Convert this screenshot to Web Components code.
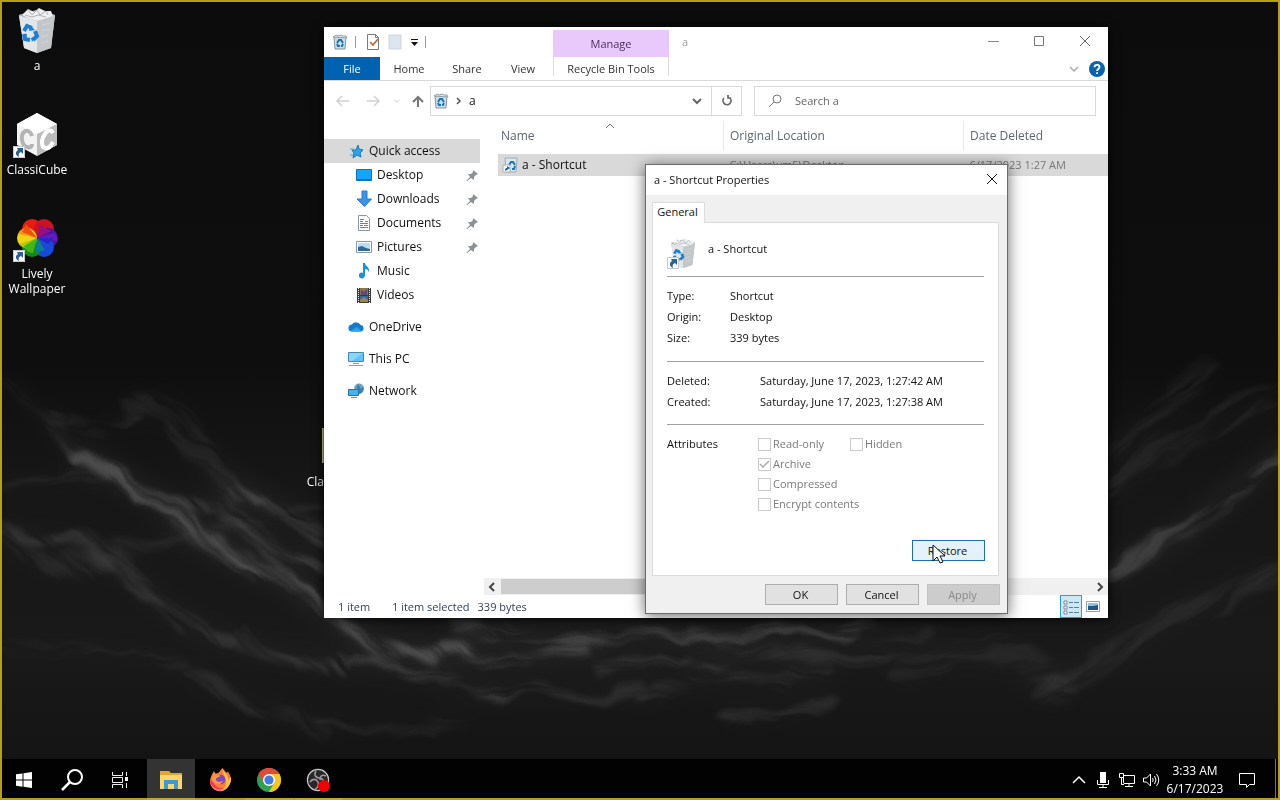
<!DOCTYPE html>
<html lang="en">
<head>
<meta charset="utf-8">
<meta name="viewport" content="width=device-width, initial-scale=1">
<title>Desktop</title>
<style>
html, body { margin: 0; height: 100%; }
body { font: 12px/16px "Open Sans", "Noto Sans", sans-serif; color: #000; background: #0c0c0c; overflow: hidden; }
</style>
</head>
<body>
<win-desktop>
  <desktop-icon slot="canvas" icon="bin" style="--x:0px;--y:6px">a</desktop-icon>
  <desktop-icon slot="canvas" icon="cube" shortcut style="--x:0px;--y:110px">ClassiCube</desktop-icon>
  <desktop-icon slot="canvas" icon="lively" shortcut style="--x:0px;--y:214px">Lively Wallpaper</desktop-icon>
  <desktop-icon slot="canvas" icon="folder" style="--x:300px;--y:422px">ClassiCube</desktop-icon>
  <explorer-window slot="canvas"></explorer-window>
  <properties-dialog slot="canvas"></properties-dialog>
  <task-bar slot="taskbar"></task-bar>
</win-desktop>

<script>
const binShape = `
  <path d="M6 9l17-4 19 4-4 33-14 5-13-5z" fill="#cfd3d6"/>
  <path d="M6 10l18 4v33l-13-5z" fill="#e3e6e8"/><path d="M24 14l18-5-4 33-14 5z" fill="#c3c7ca"/>
  <path d="M6 9l17-5 19 5-18 6z" fill="#9da3a8"/>
  <path d="M9 9l6-6 6 3 5-4 6 3 6 0 2 5-9 3-7 2-9-3z" fill="#eef0f1"/><path d="M15 4l4 5 5-5 3 5 6-4 2 4M12 9l7 2 6-2 8 2" stroke="#aeb4b8" fill="none"/>
  <path d="M29 19l8-2M29 25l7-2M28 31l7-2M28 37l7-2" stroke="#d2d6d9" fill="none"/>
  <g fill="none" stroke="#1d7fd0" stroke-width="4"><path d="M11 25l3-5 5 2"/><path d="M22 25l2 5-4 4"/><path d="M17 34l-5-1-1-5"/></g>
  <path d="M17 19l5 5-6 1zM23 30l-4 6-1-4zM9 29l5-1-1 5z" fill="#1d7fd0"/>`;
const smallBin = `
  <path d="M2 3h12l-1 12H3z" fill="#cfdce6" stroke="#8596a3"/><path d="M1 3l3-2 2 1 3-1 2 1 3 0 1 2z" fill="#dfe5ea" stroke="#94a1ab"/>
  <path d="M5 9l2-3h2l2 3M11 10l-1 2H9M5 10l1 2h2" stroke="#1676b8" stroke-width="2" fill="none"/>`;
const ICONS = {
  bin: [48, binShape],
  smallbin: [16, smallBin],
  shortcutbin: [16, `<path d="M3 1h12l-1 14H4z" fill="#dbe7ef" stroke="#9aacb9"/><path d="M7 8l2-3h2l2 3M13 9l-1 3h-2" stroke="#1676b8" stroke-width="2" fill="none"/><path d="M1 8h7v7H1z" fill="#fff" stroke="#a7b3bc"/><path d="M3 14c0-3 1-3 2-3V9l3 2-3 2" fill="#1f5f9f"/>`],
  arrow: [12, `<path d="M0 0h12v12H0z" fill="#fff"/><path d="M.500.500h11v11H.500z" fill="none" stroke="#c4c9ce"/><path d="M4 2h6v6L8 6c-2 1-3 2-2 5-4-2-4-5-1-7z" fill="#2f5f97"/>`],
  cube: [48, `<path d="M24 3l20 11v21L24 46 4 35V14z" fill="#f3f3f3"/><path d="M24 3l20 11-20 10L4 14z" fill="#fff"/><path d="M24 24l20-10v21L24 46z" fill="#bcbcbc"/>
    <path d="M19 26c-1-4-5-7-8-4-4 4-2 14 3 15 3 1 5 0 5-3" fill="none" stroke="#b4b4b4" stroke-width="4"/><path d="M40 23c-2-4-6-3-8 1-4 5-4 13 0 14 3 1 6-2 8-6" fill="none" stroke="#fff" stroke-width="4"/>`],
  lively: [48, `<circle cx="19" cy="15" r="10" fill="#e81a14"/><circle cx="31" cy="15" r="10" fill="#c91222"/><circle cx="35" cy="24" r="10" fill="#4b16a0"/><circle cx="31" cy="33" r="10" fill="#1749dd"/><circle cx="19" cy="33" r="10" fill="#128a17"/><circle cx="14" cy="24" r="10" fill="#f3d311"/>
    <path d="M24 24L5 20a10 10 0 0 1 12-6z" fill="#f59a12"/><path d="M24 24L9 18l4-8z" fill="#f0500e"/><path d="M24 24L13 34a10 10 0 0 1-7-4z" fill="#a8cf12"/><path d="M24 24l-4 15a9 9 0 0 1-9-7z" fill="#45b514"/><path d="M24 24l-2 15 10-3z" fill="#0d7d95"/><path d="M24 24l17-5a10 10 0 0 1 3 8z" fill="#6719c0"/><path d="M24 24l3-13 11 6z" fill="#951080"/><path d="M24 24l11 6 6-6z" fill="#2a23c9"/>`],
  folder: [48, `<path d="M9 6h36v35H9z" fill="#c9b95e"/><path d="M9 6h1v35H9z" fill="#efe6ac"/>`],
  docCheck: [16, `<path d="M2.500.500h8l3 3v12h-11z" fill="#fff" stroke="#7a7a7a"/><path d="M10.500.500v3h3" fill="none" stroke="#7a7a7a"/><path d="M5 8l3 3 5-6" fill="none" stroke="#b5693f" stroke-width="1.700"/>`],
  docPale: [16, `<path d="M2 1h12v14H2z" fill="#dbe6ef" stroke="#c9d5df"/>`],
  qat: [10, `<path d="M0 2h7v1H0zM0 5h7L3.500 9z" fill="#111"/>`],
  min: [12, `<path d="M1 6h11v1H1z" fill="#888"/>`],
  max: [12, `<path d="M1.500 1.500h9v9h-9z" fill="none" stroke="#777"/>`],
  close: [12, `<path d="M1 1l10 10M11 1L1 11" stroke="currentColor" fill="none"/>`],
  down: [12, `<path d="M2 4l4 4 4-4" stroke="currentColor" stroke-width="2" fill="none"/>`],
  thinDown: [12, `<path d="M2 4l4 4 4-4" stroke="currentColor" stroke-width="1.500" fill="none"/>`],
  thinUp: [12, `<path d="M2 7l4-4 4 4" stroke="currentColor" fill="none"/>`],
  rightSmall: [8, `<path d="M2 1l3 3-3 3" stroke="#555" stroke-width="1.500" fill="none"/>`],
  left: [12, `<path d="M7 2L3 6l4 4" stroke="#444" stroke-width="2" fill="none"/>`],
  right: [12, `<path d="M4 2l4 4-4 4" stroke="#444" stroke-width="2" fill="none"/>`],
  back: [14, `<path d="M13 7H2M6 2L1 7l5 5" stroke="#d2d2d2" stroke-width="1.500" fill="none"/>`],
  forward: [14, `<path d="M1 7h11M8 2l5 5-5 5" stroke="#d2d2d2" stroke-width="1.500" fill="none"/>`],
  up: [14, `<path d="M7 13V3M2 8l5-5 5 5" stroke="#777" stroke-width="2" fill="none"/>`],
  refresh: [12, `<path d="M9 3a4 4 0 1 1-6 0M2 3h3V0" stroke="#666" stroke-width="1.700" fill="none" transform="matrix(-1 0 0 1 12 0)"/>`],
  search: [14, `<circle cx="9" cy="5" r="4" fill="none" stroke="#777"/><path d="M6 8l-5 5" stroke="#777"/>`],
  help: [16, `<circle cx="8" cy="8" r="8" fill="#0b62b0"/><path d="M5.500 6.200C5.500 3 10.500 3 10.500 6c0 2-2.400 1.900-2.400 4M8.100 11.300v1.600" stroke="#fff" stroke-width="1.800" fill="none"/>`],
  star: [16, `<path d="M10 2l1 4 4 1-3 3 1 4-4-2-4 3 1-5-2-3h4z" fill="#2ba5e8" stroke="#1b76b5"/><path d="M2 6h4M2 12h3" stroke="#4aa5dd"/>`],
  desk: [16, `<path d="M.500 2.500h15v11H.500z" fill="#12a5fb" stroke="#0c74c2"/><path d="M1 12h14v1H1z" fill="#0b68ad"/>`],
  dl: [16, `<path d="M6 0h5v8h4.500L8.500 15.500 1 8h5z" fill="#3b93e8" stroke="#2c78c6"/>`],
  doc: [16, `<path d="M2.500.500h8l3 3v12h-11z" fill="#fff" stroke="#8b979f"/><path d="M4 4.500h4M4 6.500h3M9 6.500h3M4 8.500h8M4 10.500h3M8 10.500h4M4 12.500h8" stroke="#3a9aa0"/>`],
  pic: [16, `<path d="M.500 2.500h15v11H.500z" fill="#fff" stroke="#8d979f"/><path d="M2 4h12v8H2z" fill="#b9dff7"/><path d="M2 8l4-1 4 2 4 1v2H2z" fill="#33699a"/>`],
  music: [16, `<path d="M7 0h2c0 3 5 4 4 9-1-2-2-3-4-3v6c0 5-7 4-6 0 0-2 2-3 4-2z" fill="#1593dc"/>`],
  video: [16, `<path d="M1 1h14v15H1z" fill="#3a3a3a"/><path d="M4 1h8v7H4z" fill="#8d7350"/><path d="M4 9h8v6H4z" fill="#3468a8"/><path d="M5 3l3 2 3-3v6H5z" fill="#5b4a7a"/><path d="M4 13l4-3 4 3v2H4z" fill="#a08644"/><path d="M2.500 1v15M13.500 1v15" stroke="#eee" stroke-dasharray="1 1"/>`],
  cloud: [16, `<path d="M4 12.500a3.500 3.500 0 0 1 0-7 5 5 0 0 1 8.500.500 3.300 3.300 0 0 1 .500 6.500z" fill="#1379cf"/><path d="M2 12l7-4 5 4.500H4z" fill="#2aa5ec"/>`],
  pc: [16, `<path d="M.500 1.500h15v9H.500z" fill="#62c2f7" stroke="#4b87ad"/><path d="M1 2h14L4 10H1z" fill="#8ad6fb"/><path d="M5 12.500h6M1 14.500h14" stroke="#8d9ba5"/>`],
  net: [16, `<path d="M6 5c1-6 9-6 10 0 0 4-2 6-6 6z" fill="#6ba3c4"/><path d="M10 1c-2 3-1 8 0 10 4-1 6-4 5-7l-2 2z" fill="#3d7fa8"/><path d="M.500 6.500h10v6H.500z" fill="#43b4f2" stroke="#2b719c"/><path d="M3 14.500h6" stroke="#5c90ad"/>`],
  pin: [12, `<path d="M7 1l5 4-2 1-2 2 0 3-3-2-4 3-1 0 4-4-2-3h3l2-2z" fill="#8c9196"/>`],
  details: [16, `<path d="M1 2h3v3H1zM1 7h3v3H1zM1 12h3v3H1z" fill="#fff" stroke="#8a8190"/><path d="M6 3.500h4M11 3.500h5M6 8.500h4M11 8.500h5M6 13.500h4M11 13.500h5" stroke="#5c7f90"/>`],
  thumb: [14, `<path d="M.500 1.500h13v10H.500z" fill="#fff" stroke="#8ea2b0"/><path d="M2 3h10v3H2z" fill="#8bc4ec"/><path d="M2 6h5l5-1v5H2z" fill="#27577f"/>`],
  win: [16, `<path d="M0 2.300L6.500 1.400v6.200H0zM7.500 1.200L16 0v7.600H7.500zM0 8.500h6.500v6.200L0 13.800zM7.500 8.500H16V16l-8.500-1.200z" fill="#fff"/>`],
  tbSearch: [22, `<circle cx="14" cy="8" r="7" fill="none" stroke="#fff" stroke-width="2"/><path d="M9 13l-8 8" stroke="#fff" stroke-width="2.500"/>`],
  taskview: [16, `<path d="M.500 0v3.500h10V0M.500 16v-3.500h10V16M.500 5.500h10v5H.500zM14.500 0v4M14.500 11v5" fill="none" stroke="#eee"/><path d="M13 5h3v4h-3z" fill="#eee"/>`],
  explorer: [22, `<path d="M0 2h9l2 2h11v16H0z" fill="#e5a52d"/><path d="M0 6h22v14H0z" fill="#fbd76b"/><path d="M4 20v-9h14v9h-4v-5H8v5z" fill="#3f97d3"/>`],
  firefox: [24, `<path d="M3 7L5 3l2 3 3-1 4-5 4 5 2-1c3 5 4 9 1 14-4 8-14 8-18 2-3-4-2-9 0-13z" fill="#ff7a32"/><path d="M14 0c0 4 7 6 6 13l3-4c1 7-4 14-11 15 6-4 8-11 3-17z" fill="#ffc23a"/><path d="M1 12c1 9 8 12 15 9-7 1-10-3-12-7z" fill="#ef3366"/><circle cx="12" cy="12" r="5" fill="#7a48c6"/><path d="M4 7c3-2 6 0 8 1-1 2-4 1-5 4 1 3 5 3 8 1-3 6-11 5-12-1z" fill="#ff963c"/>`],
  chrome: [24, `<circle cx="12" cy="12" r="12" fill="#2fa150"/><path d="M12 12L1.600 6A12 12 0 0 1 22.400 6z" fill="#e04a3a"/><path d="M12 6h10.400A12 12 0 0 1 12 24l5.200-9z" fill="#fbc518"/><path d="M1.600 6L7 15l5-9h10.400A12 12 0 0 0 1.600 6z" fill="#e04a3a"/><circle cx="12" cy="12" r="6" fill="#fff"/><circle cx="12" cy="12" r="4.600" fill="#3b7de2"/>`],
  obs: [24, `<circle cx="12" cy="12" r="10.600" fill="#28272b" stroke="#c9c9c9" stroke-width="1.200"/><path d="M10 3c-3 5 1 7 4 7 3 1 5 3 4 7M4 14c2-3 6-4 8 0 1 3 0 6-3 7M20 8c-4-2-6 0-6 4" fill="none" stroke="#999" stroke-width="1.600"/><circle cx="18" cy="18" r="6" fill="#f20000"/>`],
  chevUp: [14, `<path d="M1 10l6-6 6 6" stroke="#fff" stroke-width="1.500" fill="none"/>`],
  mic: [16, `<path d="M5 0h6v11H5z" fill="#fff"/><path d="M2.500 8v4.500h11V8M8 13v2.500M4 15.500h8" stroke="#fff" fill="none"/>`],
  lan: [16, `<path d="M4.500 3.500h11v8h-11zM10 12v3M6 14.500h8" stroke="#fff" fill="none"/><path d="M.500 1.500h4v4h-4zM2.500 6v6.500H5" stroke="#fff" fill="#000"/>`],
  sound: [16, `<path d="M.500 6h3l4-4v12l-4-4h-3z" stroke="#fff" fill="none"/><path d="M9.500 6q1.500 2 0 4M11.500 4q3 4 0 8M13.500 2q4.500 6 0 12" stroke="#fff" fill="none"/>`],
  note: [18, `<path d="M1.500 2.500h15v11h-5l-3 3v-3h-7z" stroke="#fff" fill="none"/>`],
  cursor: [20, `<path d="M1 0v16l4-4 3 6 3-1-3-6h5z" fill="#fff" stroke="#111"/>`]
};

/* Registers an element whose shadow root is cloned from a template. */
function component(tag, html, setup) {
  const template = document.createElement("template");
  template.innerHTML = html;
  customElements.define(tag, class extends HTMLElement {
    connectedCallback() {
      if (this.shadowRoot) return;
      this.attachShadow({ mode: "open" }).append(template.content.cloneNode(true));
      if (setup) setup.call(this, this.shadowRoot);
    }
  });
}

component("ui-icon", `<style>:host{display:block;flex:none}svg{display:block;overflow:visible}</style><svg aria-hidden="true"></svg>`, function (root) {
  const [box, body] = ICONS[this.getAttribute("name")];
  const size = this.getAttribute("size") || box;
  const svg = root.querySelector("svg");
  svg.setAttribute("viewBox", `0 0 ${box} ${box}`);
  svg.setAttribute("width", size);
  svg.setAttribute("height", size);
  svg.innerHTML = body;
});

/* The fibres are noise stretched along one axis; each ridge group is filtered in a rotated frame so they run with the slope. */
component("desktop-wallpaper", `
<style>:host{display:block;position:absolute;inset:0}svg{display:block;width:100%;height:100%}</style>
<svg viewBox="0 0 1280 800" preserveAspectRatio="xMidYMid slice" aria-hidden="true">
  <defs>
    <linearGradient id="g" x2="0" y2="1"><stop offset="0" stop-color="#0c0c0c"/><stop offset=".45" stop-color="#0e0e0e"/><stop offset=".6" stop-color="#161616"/><stop offset=".82" stop-color="#191919"/><stop offset="1" stop-color="#121212"/></linearGradient>
    <filter id="haze" filterUnits="userSpaceOnUse" x="0" y="300" width="1280" height="500"><feGaussianBlur stdDeviation="12"/></filter>
    <filter id="silk" filterUnits="userSpaceOnUse" x="-900" y="-900" width="2600" height="2600">
      <feTurbulence type="fractalNoise" baseFrequency=".016" numOctaves="3" seed="9" result="warp"/>
      <feDisplacementMap in="SourceGraphic" in2="warp" scale="24" xChannelSelector="R" yChannelSelector="G"/>
      <feGaussianBlur stdDeviation="3" result="soft"/>
      <feTurbulence type="fractalNoise" baseFrequency=".009 .075" numOctaves="4" seed="21"/>
      <feColorMatrix values="0 0 0 0 1  0 0 0 0 1  0 0 0 0 1  3 0 0 0 -.9" result="fibres"/>
      <feComposite in="soft" in2="fibres" operator="in" result="strands"/>
      <feDisplacementMap in="strands" in2="warp" scale="24" xChannelSelector="G" yChannelSelector="B"/>
      <feGaussianBlur stdDeviation=".7"/>
    </filter>
    <g id="left" fill="none" stroke="#fff" stroke-linecap="round" stroke-linejoin="round">
      <path d="M6 378L45 420 73 450 118 478" stroke-width="10" stroke-opacity=".35"/>
      <path d="M78 455L118 476 171 510 196 537 245 564 286 578 318 604 347 626 376 647 433 654 469 652" stroke-width="15" stroke-opacity=".8"/>
      <path d="M135 405L167 405 196 445 229 485 261 502" stroke-width="26" stroke-opacity=".24"/>
      <path d="M229 485L261 502 298 519 330 542" stroke-width="15" stroke-opacity=".55"/>
      <path d="M0 534L86 547 114 559 163 605 204 632 261 649 347 665" stroke-width="14" stroke-opacity=".42"/>
      <path d="M0 535L20 552 50 566 90 567 114 559" stroke-width="14" stroke-opacity=".25"/>
      <path d="M196 679L253 705 327 729" stroke-width="13" stroke-opacity=".3"/>
      <path d="M180 509L220 505 245 532 278 555 325 564" stroke-width="18" stroke-opacity=".45"/>
    </g>
    <g id="right" fill="none" stroke="#fff" stroke-linecap="round" stroke-linejoin="round">
      <path d="M1095 575L1150 553 1191 527 1244 483 1290 440" stroke-width="17" stroke-opacity=".6"/>
      <path d="M1108 490L1150 453 1211 425 1277 400" stroke-width="24" stroke-opacity=".22"/>
      <path d="M1108 450L1171 403 1211 365" stroke-width="18" stroke-opacity=".22"/>
      <path d="M1040 690L1109 657 1171 617 1277 573" stroke-width="22" stroke-opacity=".24"/>
    </g>
    <g id="flat" fill="none" stroke="#fff" stroke-linecap="round" stroke-linejoin="round">
      <path d="M0 650L45 647 122 650 180 665M327 727L408 725 470 720M0 482L53 482 110 470M60 420L98 430 140 420M120 545L200 538 260 515 320 510" stroke-width="10" stroke-opacity=".25"/>
      <path d="M347 663L392 668 449 680 502 697" stroke-width="10" stroke-opacity=".5"/>
      <path d="M460 624L500 632 535 638M470 655L530 660 590 650M545 640L600 642 650 632 720 640 800 634 840 628 870 622" stroke-width="12" stroke-opacity=".6"/>
      <path d="M600 665L680 664 740 652 790 658 850 655 900 640 930 632M640 700L700 680 740 660M480 690L560 694 640 690M700 676L770 680 830 672M720 712L760 716 830 700" stroke-width="11" stroke-opacity=".35"/>
      <path d="M900 668L960 652 1020 660 1060 690" stroke-width="30" stroke-opacity=".2"/>
    </g>
  </defs>
  <rect width="1280" height="800" fill="url(#g)"/>
  <g filter="url(#haze)" opacity=".09"><use href="#left"/><use href="#right"/><use href="#flat"/></g>
  <g opacity=".24">
    <g transform="rotate(38)"><g filter="url(#silk)"><use href="#left" transform="rotate(-38)"/></g></g>
    <g transform="rotate(-34)"><g filter="url(#silk)"><use href="#right" transform="rotate(34)"/></g></g>
    <g filter="url(#silk)"><use href="#flat"/></g>
  </g>
</svg>`);

component("win-desktop", `
<style>
:host{display:flex;flex-direction:column;height:100vh;position:relative;overflow:hidden;background:#0c0c0c}
main{position:relative;flex:1;min-height:0}
.frame{position:absolute;inset:0;border:2px solid #c3a71bf0;pointer-events:none}
</style>
<desktop-wallpaper></desktop-wallpaper>
<main><slot name="canvas"></slot></main>
<slot name="taskbar"></slot>
<div class="frame"></div>`);

component("desktop-icon", `
<style>
:host{display:block;position:absolute;left:var(--x);top:var(--y);width:74px;color:#fff;text-align:center;line-height:15px}
.pic{position:relative;width:48px;margin:0 auto 4px}
.badge{position:absolute;left:0;bottom:0}
</style>
<div class="pic"></div><slot></slot>`, function (root) {
  root.querySelector(".pic").innerHTML = `<ui-icon name="${this.getAttribute("icon")}"></ui-icon>` +
    (this.hasAttribute("shortcut") ? `<ui-icon class="badge" name="arrow"></ui-icon>` : "");
});

component("side-link", `
<style>
:host{display:block}
:host([gap]){margin-top:8px}
a{display:flex;align-items:center;height:24px;gap:5px;padding:0 2px 0 24px;color:#111;text-decoration:none}
:host([sub]) a{padding-left:32px}
:host([selected]) a{background:#d9d9d9}
span{flex:1}
</style>
<a href="#"><span><slot></slot></span></a>`, function (root) {
  const link = root.querySelector("a");
  link.insertAdjacentHTML("afterbegin", `<ui-icon name="${this.getAttribute("icon")}"></ui-icon>`);
  if (this.hasAttribute("pinned")) link.insertAdjacentHTML("beforeend", `<ui-icon name="pin"></ui-icon>`);
});

component("explorer-window", `
<style>
:host{position:absolute;left:324px;right:172px;top:27px;bottom:141px;display:flex;flex-direction:column;background:#fff;color:#333;box-shadow:0 0 10px #000}
button{font:inherit;color:inherit;border:0;background:none;padding:0;display:flex;align-items:center;justify-content:center}
header{display:flex;height:30px;font-size:11px}
.quick{display:flex;align-items:center;width:221px;padding-left:8px}
.quick button{width:16px;height:24px}
.quick i{width:1px;height:12px;background:#999}
.quick .first{margin:0 9px 0 7px}
.quick .page{margin:0 5px 0 6px}
.quick .more{width:10px;margin-right:4px;margin-left:3px}
.manage{width:116px;margin-top:3px;box-sizing:border-box;background:#e9c9fb;color:#4c2b60;display:flex;align-items:center;justify-content:center}
.title{flex:1;padding:7px 13px;color:#999}
.caption{width:46px;height:28px;color:#666}
.tabs{display:flex;height:23px;border-bottom:1px solid #dadada;font-size:11px}
.tabs button{width:58px}
.tabs .file{width:56px;background:#0063b1;color:#fff}
.tabs .view{width:54px}
.tabs .tools{width:116px;margin:0 auto 4px 3px;border:solid #dcdcdc;border-width:0 1px;padding-top:4px;box-sizing:border-box}
.tabs .more{width:20px;color:#aaa}.tabs .help{width:24px;padding-left:1px}
.bar{display:flex;align-items:center;height:40px;padding-right:12px}
.bar nav{display:flex;align-items:center;width:106px}
.nav{width:30px;height:28px}
.bar .backb{margin-left:4px}
.bar .recent{width:17px;color:#ccc}
.bar .upb{width:25px}
.field{box-sizing:border-box;height:30px;border:1px solid #d9d9d9;display:flex;align-items:center}
.address{flex:1;padding-left:2px;color:#111}
.crumb{display:flex;align-items:center;gap:6px;flex:1}
.drop{width:28px;height:28px;color:#666}.refresh{width:30px;height:28px;border-left:1px solid #d9d9d9}
.search{width:342px;margin-left:12px;padding:0 13px}
.search input{flex:1;min-width:0;border:0;padding:0 0 0 13px;font:inherit;font-size:11px;outline:0}
.search input::placeholder{color:#666;opacity:1}
.content{display:grid;grid-template-columns:160px 1fr;flex:1;min-height:0}
.side{padding:18px 4px 0 0}
.list{display:flex;flex-direction:column;min-width:0}
table{border-collapse:collapse;table-layout:fixed;width:calc(100% - 14px);margin-left:14px}
th,td{font-weight:400;text-align:left;padding:0 0 0 6px;white-space:nowrap;overflow:hidden}
th{height:30px;color:#5c6672;position:relative}
th+th{border-left:1px solid #e8e8e8}
th:first-child{padding-left:3px;width:222px}th:nth-child(2){width:233px}
.sort{position:absolute;left:106px;top:0;color:#777}
tbody tr:first-child td{height:3px}
.row td{height:22px;background:#d9d9d9;color:#777;font-size:11px}
.row td:first-child{padding-left:4px;color:#111}
.file-name{display:flex;align-items:center;gap:4px;font-size:12px}
.scroll{display:flex;align-items:center;height:17px;margin-top:auto;background:#f0f0f0}
.scroll button{width:17px;height:17px}.track{flex:1}.thumb{width:60%;height:15px;background:#cdcdcd}
footer{display:flex;align-items:center;height:23px;padding:0 4px 0 14px;color:#33405a;font-size:11px}
.n{width:54px}.s{margin-right:8px}.sp{flex:1}
footer button{width:22px;height:23px;box-sizing:border-box}
.on{background:#cbe8f6;border:1px solid #26a0da}
</style>
<header>
  <div class="quick"><button aria-label="Window menu"><ui-icon name="smallbin"></ui-icon></button><i class="first"></i>
    <button aria-label="Properties"><ui-icon name="docCheck"></ui-icon></button><button class="page" aria-label="New"><ui-icon name="docPale"></ui-icon></button>
    <button class="more" aria-label="Customize"><ui-icon name="qat"></ui-icon></button><i></i></div>
  <div class="manage">Manage</div><div class="title">a</div>
  <button class="caption" aria-label="Minimize"><ui-icon name="min"></ui-icon></button>
  <button class="caption" aria-label="Maximize"><ui-icon name="max"></ui-icon></button>
  <button class="caption" aria-label="Close"><ui-icon name="close"></ui-icon></button>
</header>
<div class="tabs"><button class="file">File</button><button>Home</button><button>Share</button><button class="view">View</button><button class="tools">Recycle Bin Tools</button>
  <button class="more" aria-label="Expand ribbon"><ui-icon name="thinDown"></ui-icon></button><button class="help" aria-label="Help"><ui-icon name="help"></ui-icon></button></div>
<div class="bar">
  <nav><button class="nav backb" aria-label="Back"><ui-icon name="back"></ui-icon></button><button class="nav" aria-label="Forward"><ui-icon name="forward"></ui-icon></button><button class="recent" aria-label="Recent"><ui-icon name="thinDown" size="8"></ui-icon></button><button class="upb" aria-label="Up"><ui-icon name="up"></ui-icon></button></nav>
  <div class="field address"><div class="crumb"><ui-icon name="smallbin"></ui-icon><ui-icon name="rightSmall"></ui-icon><span>a</span></div>
    <button class="drop" aria-label="Previous locations"><ui-icon name="down"></ui-icon></button><button class="refresh" aria-label="Refresh"><ui-icon name="refresh"></ui-icon></button></div>
  <label class="field search"><ui-icon name="search"></ui-icon><input type="text" placeholder="Search a" aria-label="Search a"></label>
</div>
<div class="content">
  <nav class="side">
    <side-link icon="star" selected>Quick access</side-link>
    <side-link icon="desk" sub pinned>Desktop</side-link>
    <side-link icon="dl" sub pinned>Downloads</side-link>
    <side-link icon="doc" sub pinned>Documents</side-link>
    <side-link icon="pic" sub pinned>Pictures</side-link>
    <side-link icon="music" sub>Music</side-link>
    <side-link icon="video" sub>Videos</side-link>
    <side-link icon="cloud" gap>OneDrive</side-link>
    <side-link icon="pc" gap>This PC</side-link>
    <side-link icon="net" gap>Network</side-link>
  </nav>
  <div class="list">
    <table>
      <thead><tr><th>Name<ui-icon class="sort" name="thinUp"></ui-icon></th><th>Original Location</th><th>Date Deleted</th></tr></thead>
      <tbody><tr aria-hidden="true"><td colspan="3"></td></tr>
      <tr class="row"><td><div class="file-name"><ui-icon name="shortcutbin"></ui-icon>a - Shortcut</div></td><td>C:\\Users\\vm5\\Desktop</td><td>6/17/2023 1:27 AM</td></tr></tbody>
    </table>
    <div class="scroll"><button aria-label="Scroll left"><ui-icon name="left"></ui-icon></button><div class="track"><div class="thumb"></div></div><button aria-label="Scroll right"><ui-icon name="right"></ui-icon></button></div>
  </div>
</div>
<footer><span class="n">1 item</span><span class="s">1 item selected</span><span>339 bytes</span><span class="sp"></span>
  <button class="on" aria-label="Details view"><ui-icon name="details"></ui-icon></button><button aria-label="Thumbnail view"><ui-icon name="thumb"></ui-icon></button></footer>`);

component("attr-check", `
<style>
:host{display:block}
label{display:flex;align-items:center;gap:2px;color:#7a7a7a}
input{appearance:none;width:13px;height:13px;margin:0;border:1px solid #ccc;background:#fff}
input:checked{background:no-repeat center/11px url("data:image/svg+xml,%3Csvg xmlns='http://www.w3.org/2000/svg' viewBox='0 0 11 11'%3E%3Cpath d='M1 5l3 3 6-6' fill='none' stroke='%23aaa' stroke-width='1.500'/%3E%3C/svg%3E")}
</style>
<label><input type="checkbox" disabled><slot></slot></label>`, function (root) {
  root.querySelector("input").checked = this.hasAttribute("checked");
});

component("push-button", `
<style>
:host{display:block;width:73px}
button{font:inherit;width:100%;height:21px;padding:0 2px 0 0;border:1px solid #adadad;background:#e1e1e1;color:#111;display:block}
:host([hot]) button{background:#e5f1fb;border-color:#1f6fb0}
button:disabled{background:#ccc;border-color:#c2c2c2;color:#8b8b8b}
</style>
<button><slot></slot></button>`, function (root) {
  root.querySelector("button").disabled = this.hasAttribute("off");
});

component("properties-dialog", `
<style>
:host{position:absolute;right:272px;top:164px;width:363px;box-sizing:border-box;border:1px solid #6b6b6b;background:#f0f0f0;color:#111;box-shadow:0 2px 14px #0009}
.bar{display:flex;align-items:center;justify-content:space-between;height:30px;padding-left:8px;background:#fff;font-size:11px}
.bar button{width:30px;height:28px;border:0;background:none;padding:0;margin-bottom:2px;color:#111;display:flex;align-items:center;justify-content:center}
.body{padding:7px 8px 8px 6px;font-size:11px}
.tab{display:block;font:inherit;width:53px;height:21px;padding:0 2px 2px 0;border:1px solid #dcdcdc;border-bottom:0;background:#fff;color:#111;position:relative;margin-bottom:-1px}
.panel{border:1px solid #dcdcdc;background:#fff;padding:14px 14px}
.head{display:flex;gap:9px;height:39px}
.head .pic{position:relative}.badge{position:absolute;left:0;bottom:7px}
.head span{padding-top:4px}
hr{border:0;border-top:1px solid #a0a0a0;margin:0}
dl{display:grid;grid-template-columns:63px 1fr;grid-auto-rows:21px;align-items:center;margin:0;padding:8px 0 13px}
dl.dates{grid-template-columns:93px 1fr;padding-bottom:12px}
dd{margin:0}
fieldset{border:0;margin:0;padding:9px 0 26px;display:grid;grid-template-columns:91px 92px 1fr;grid-auto-rows:20px;align-items:center}
.c2{grid-column:2/4}
.actions{display:flex;justify-content:flex-end;margin-right:-1px}
.restore{position:relative}
.cursor{position:absolute;left:20px;top:5px;pointer-events:none}
.buttons{display:flex;justify-content:flex-end;gap:8px;margin-top:8px;margin-right:-1px}
</style>
<div class="bar"><span>a - Shortcut Properties</span><button aria-label="Close"><ui-icon name="close"></ui-icon></button></div>
<div class="body">
  <button class="tab">General</button>
  <div class="panel">
    <div class="head"><div class="pic"><ui-icon name="bin" size="32"></ui-icon><ui-icon class="badge" name="arrow"></ui-icon></div><span>a - Shortcut</span></div>
    <hr>
    <dl><dt>Type:</dt><dd>Shortcut</dd><dt>Origin:</dt><dd>Desktop</dd><dt>Size:</dt><dd>339 bytes</dd></dl>
    <hr>
    <dl class="dates"><dt>Deleted:</dt><dd>Saturday, June 17, 2023, 1:27:42 AM</dd><dt>Created:</dt><dd>Saturday, June 17, 2023, 1:27:38 AM</dd></dl>
    <hr>
    <fieldset aria-label="Attributes"><span>Attributes</span><attr-check>Read-only</attr-check><attr-check>Hidden</attr-check>
      <attr-check class="c2" checked>Archive</attr-check><attr-check class="c2">Compressed</attr-check><attr-check class="c2">Encrypt contents</attr-check></fieldset>
    <div class="actions"><div class="restore"><push-button hot>Restore</push-button><ui-icon class="cursor" name="cursor"></ui-icon></div></div>
  </div>
  <div class="buttons"><push-button>OK</push-button><push-button>Cancel</push-button><push-button off>Apply</push-button></div>
</div>`);

component("task-bar", `
<style>
:host{position:relative;display:flex;align-items:center;height:41px;background:#020202;color:#fff}
button{border:0;background:none;padding:0;height:41px;width:48px;display:flex;align-items:center;justify-content:center;color:inherit;box-sizing:border-box}
.apps{display:flex;gap:1px;margin:0 auto 0 3px}
.apps .run{box-shadow:inset 0 -2px #76b9ed}
.apps .on{background:#333}
.tray{display:flex;align-items:center}
.tray button{width:24px}
time{width:64px;text-align:center;line-height:18px;padding-top:1px}
.tray .note{width:40px}
.peek{width:1px;height:100%;background:#777;margin:0 4px 0 8px}
</style>
<button aria-label="Start"><ui-icon name="win"></ui-icon></button>
<button aria-label="Search"><ui-icon name="tbSearch"></ui-icon></button>
<button aria-label="Task view"><ui-icon name="taskview"></ui-icon></button>
<div class="apps"><button class="on run" aria-label="File Explorer"><ui-icon name="explorer"></ui-icon></button><button aria-label="Firefox"><ui-icon name="firefox" size="23"></ui-icon></button><button class="run" aria-label="Chrome"><ui-icon name="chrome"></ui-icon></button><button class="run" aria-label="OBS"><ui-icon name="obs"></ui-icon></button></div>
<div class="tray"><button aria-label="Hidden icons"><ui-icon name="chevUp"></ui-icon></button><button aria-label="Microphone"><ui-icon name="mic"></ui-icon></button><button aria-label="Network"><ui-icon name="lan"></ui-icon></button><button aria-label="Volume"><ui-icon name="sound"></ui-icon></button>
  <time datetime="2023-06-17T03:33">3:33 AM<br>6/17/2023</time><button class="note" aria-label="Notifications"><ui-icon name="note"></ui-icon></button></div>
<div class="peek"></div>`);
</script>
</body>
</html>
